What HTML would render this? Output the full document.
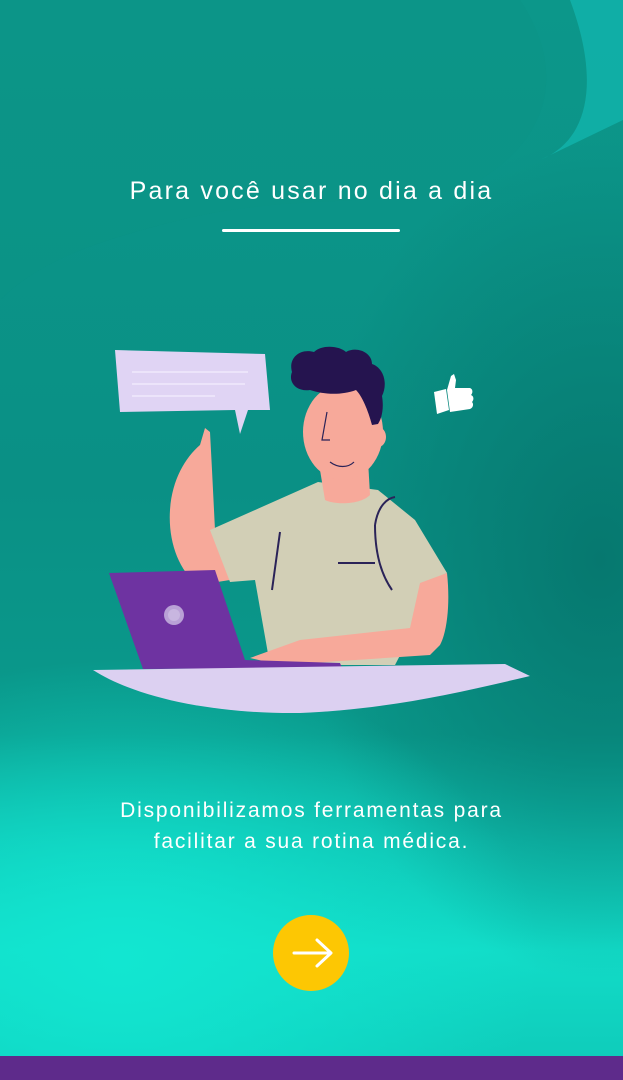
<!DOCTYPE html>
<html><head><meta charset="utf-8">
<style>
html,body{margin:0;padding:0}
body{width:623px;height:1080px;position:relative;overflow:hidden;font-family:"Liberation Sans",sans-serif;
background:
radial-gradient(ellipse 420px 300px at 120px 960px,#12e6d1 0%,rgba(18,230,209,0) 100%),
radial-gradient(ellipse 300px 420px at 600px 560px,#06786f 0%,rgba(6,120,111,0) 100%),
linear-gradient(180deg,#0c978a 0%,#0a9085 45%,#0a9a8c 68%,#0fc0b0 78%,#12dcc8 88%,#0ec9b8 100%);}
svg.bg{position:absolute;left:0;top:0}
.title{position:absolute;top:177px;left:0;width:623px;text-align:center;color:#fff;font-size:25px;letter-spacing:2.2px;font-weight:normal}
.line{position:absolute;left:222px;top:229px;width:178px;height:3px;background:#fff;border-radius:2px}
.body{position:absolute;top:795px;left:0;width:623px;text-align:center;color:#fff;font-size:21px;line-height:31px;letter-spacing:1.8px}
.btn{position:absolute;left:273px;top:915px;width:76px;height:76px;border-radius:50%;background:#fdc703}
.bar{position:absolute;left:0;top:1056px;width:623px;height:24px;background:#5e2b8b}
</style></head><body>
<svg class="bg" width="623" height="1080">
<path d="M520 0 C560 60 560 130 480 180 C430 210 300 190 180 220 C100 240 40 260 0 300 L0 0Z" fill="#0b9486" opacity="0.5"/>
<path d="M570 0 C600 80 590 140 540 160 L623 120 L623 0Z" fill="#12b4ac" opacity="0.8"/>
</svg>
<div class="title">Para você usar no dia a dia</div>
<div class="line"></div>
<svg width="623" height="1080" style="position:absolute;left:0;top:0">
<path d="M115 350 L265 354 L270 410 L248 410 L240 434 L235 410 L120 412Z" fill="#e0d4f4"/>
<path d="M132 372 L248 372 M132 384 L245 384 M132 396 L215 396" stroke="#f0eafb" stroke-width="1.5"/>
<!-- thumbs up -->
<path d="M434 392 L446 389 L449 410 L437 414Z" fill="#fff"/>
<path d="M447 390 L451 376 L454 374 L456 380 L455 388 L470 388 C473 389 473 393 471 395 C474 396 474 400 472 402 C474 404 473 408 470 409 L450 412Z" fill="#fff"/>
<path d="M200 445 C185 458 172 480 170 510 C168 540 178 570 198 585 L230 580 L215 530 L212 470 L210 432 L205 428Z" fill="#f7a99a"/>
<path d="M210 530 L318 482 L378 490 L415 520 L447 573 L420 585 L408 640 L395 665 L270 665 L255 580 L230 582Z" fill="#d2cfb6"/>
<path d="M280 532 L272 590 M375 525 C378 505 388 498 395 497 M375 525 C375 560 385 580 392 590 M338 563 L375 563" stroke="#2a2358" stroke-width="2" fill="none"/>
<path d="M320 470 L325 500 C335 505 360 505 370 495 L368 460Z" fill="#f7a99a"/>
<ellipse cx="343" cy="432" rx="40" ry="48" fill="#f7a99a"/>
<ellipse cx="378" cy="437" rx="8" ry="10" fill="#f7a99a"/>
<path d="M292 372 C288 358 300 348 314 352 C322 344 340 346 346 352 C356 346 372 352 372 364 C384 368 388 384 382 396 C384 408 382 418 378 424 L372 425 C368 410 362 396 356 390 C340 396 322 394 310 390 C296 392 288 382 292 372Z" fill="#25144f"/>
<path d="M327 412 L322 440 L330 440 M330 462 C338 468 348 468 354 462" stroke="#2a2358" stroke-width="1.2" fill="none"/>
<path d="M420 583 L447 573 C450 600 448 630 440 645 L430 655 L280 665 L250 658 L300 640 L410 628Z" fill="#f7a99a"/>
<path d="M109 573 L215 570 L245 660 L340 663 L342 668 L143 669Z" fill="#6e33a1"/>
<circle cx="174" cy="615" r="10" fill="#b9a1d6"/>
<circle cx="174" cy="615" r="6" fill="#c8b6e0"/>
<path d="M93 670 L505 664 L530 676 C450 695 380 710 300 713 C220 714 140 700 93 670Z" fill="#dcd0f1"/>
</svg>
<div class="body">Disponibilizamos ferramentas para<br>facilitar a sua rotina médica.</div>
<div class="btn"></div>
<svg width="623" height="1080" style="position:absolute;left:0;top:0">
<path d="M294 953 L330 953 M317 940 L331 953 L317 966" stroke="#fff" stroke-width="3" fill="none" stroke-linecap="round" stroke-linejoin="round"/>
</svg>
<div class="bar"></div>
</body></html>
